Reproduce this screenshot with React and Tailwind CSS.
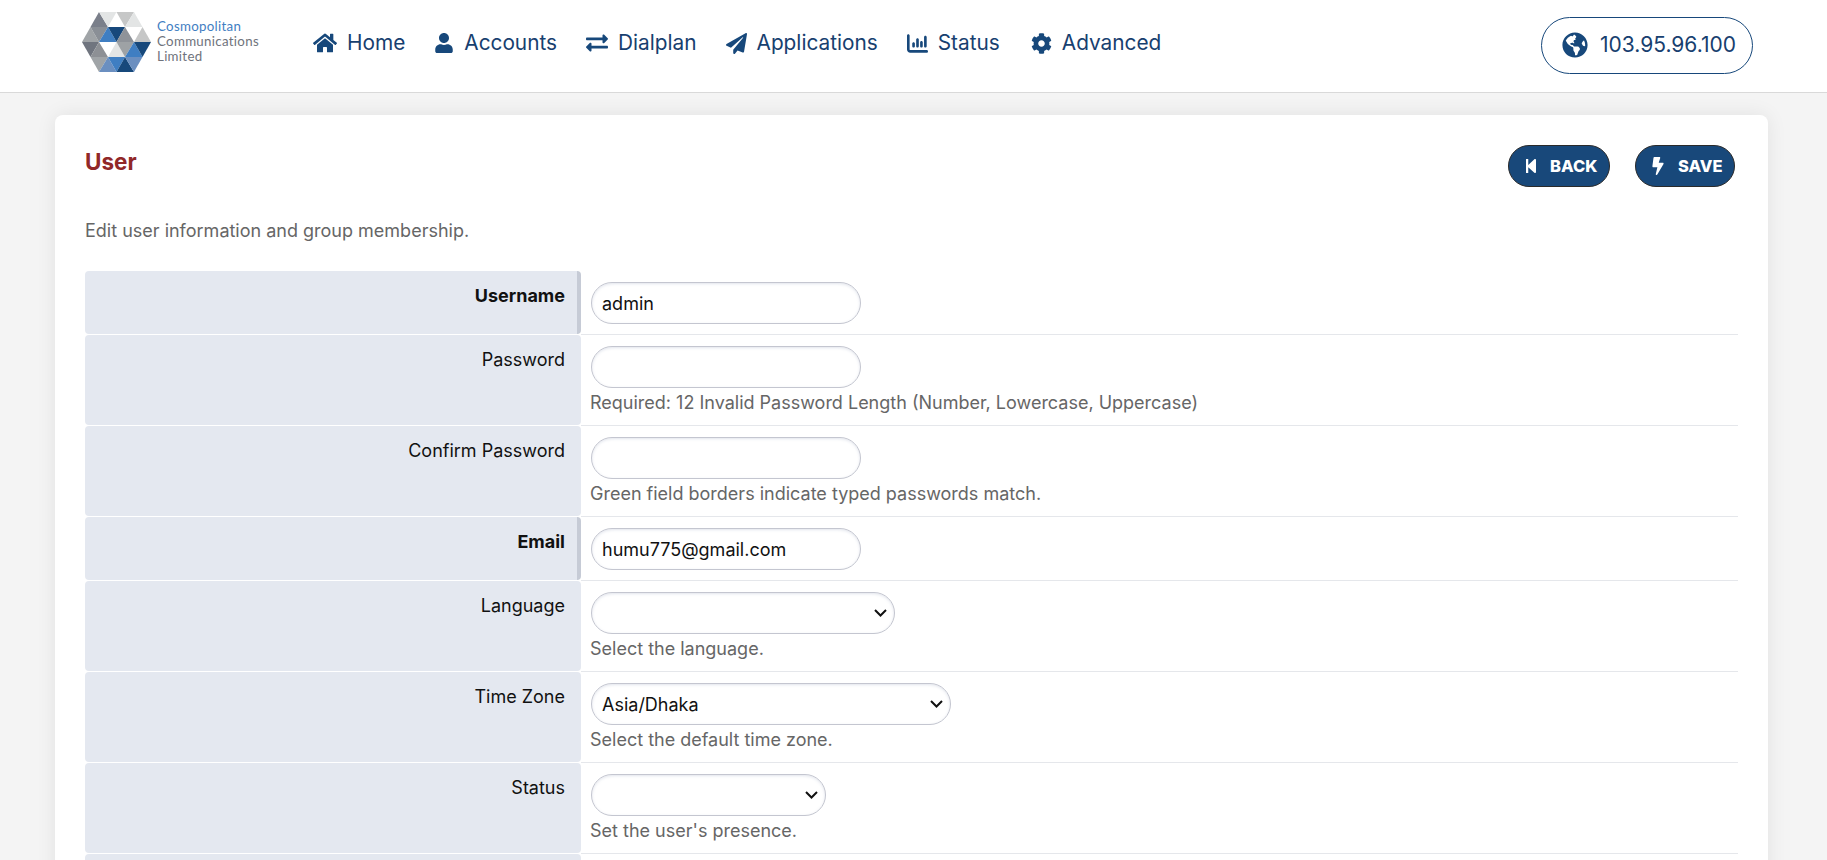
import { FaHome, FaUser, FaExchangeAlt, FaPaperPlane, FaCog, FaGlobeAmericas, FaStepBackward, FaBolt } from "react-icons/fa";
import { FaChartColumn } from "react-icons/fa6";

const NAVY = "#17487b";
const BLUE = "#3f7ec2";
const SLATE = "#6b8fc0";

// logo facets, row by row
const FACETS = [
  ["90.5,27 99,12 108,27", "#7a7f8a"],
  ["99,12 116.5,12 108,27", "#e3e5e5"],
  ["116.5,12 134,12 125,27", "#c6c7c7"],
  ["125,27 134,12 142.5,27", "#e3e5e5"],
  ["82,42 90.5,27 99,42", "#a0a4a7"],
  ["90.5,27 108,27 99,42", "#8a8f96"],
  ["99,42 108,27 116.5,42", BLUE],
  ["108,27 125,27 116.5,42", NAVY],
  ["116.5,42 125,27 134,42", "#8f9399"],
  ["134,42 142.5,27 151,42", "#c6c7c7"],
  ["82,42 99,42 90.5,57", "#70757f"],
  ["90.5,57 99,42 108,57", "#8d9095"],
  ["108,57 116.5,42 125,57", "#e3e5e5"],
  ["116.5,42 134,42 125,57", "#9ea2a5"],
  ["125,57 134,42 142.5,57", BLUE],
  ["134,42 151,42 142.5,57", NAVY],
  ["90.5,57 108,57 99,72", "#a0a4a7"],
  ["99,72 108,57 116.5,72", SLATE],
  ["108,57 125,57 116.5,72", BLUE],
  ["116.5,72 125,57 134,72", NAVY],
  ["125,57 142.5,57 134,72", SLATE],
];

const NAV = [
  ["Home", FaHome, "w-[24px] h-[24px]"],
  ["Accounts", FaUser, "w-[20px] h-[20px]"],
  ["Dialplan", FaExchangeAlt, "w-[22px] h-[22px]"],
  ["Applications", FaPaperPlane, "w-[21px] h-[21px]"],
  ["Status", FaChartColumn, "w-[21px] h-[21px]"],
  ["Advanced", FaCog, "w-[21px] h-[21px] ml-[2px]"],
];

const inputCls = "block h-[42px] rounded-[21px] border border-[#c4c6d0] bg-white shadow-[inset_0_1px_3px_rgba(120,130,170,0.22)] text-[18px] text-[#111] outline-none";

function Logo() {
  return (
    <div className="flex items-center w-[177px] h-[60px] shrink-0 mb-[8px]">
      <svg viewBox="82 12 69 60" className="w-[69px] h-[60px] shrink-0">
        {FACETS.map(([points, fill]) => <polygon key={points} points={points} fill={fill} />)}
      </svg>
      <div className="ml-[6px] text-[13.3px] leading-[15px] font-['Lato',sans-serif] text-[#6f737c] tracking-[0.3px] -mt-[1px]">
        <div className="text-[#3f7ec2]">Cosmopolitan</div>
        <div>Communications</div>
        <div>Limited</div>
      </div>
    </div>
  );
}

function Select({ width, value }) {
  return (
    <div className={`relative ${width}`}>
      <select className={`${inputCls} w-full pl-[10px] pr-[24px] appearance-none`} defaultValue={value}>
        <option>{value}</option>
      </select>
      <svg viewBox="0 0 13 8" className="absolute right-[8px] top-[17px] w-[13px] h-[8px] pointer-events-none">
        <path d="M1 1 L6.5 6.5 L12 1" fill="none" stroke="#111" strokeWidth="2" />
      </svg>
    </div>
  );
}

function Row({ label, required, desc, children }) {
  return (
    <div className="flex">
      <div className={`w-[496px] shrink-0 mb-[1px] bg-[#e4e8f0] rounded-[4px] pt-[14px] text-right text-[18px] leading-[22px] text-[#111] ${required ? "font-bold border-r-4 border-[#c6cbd6] pr-[12px]" : "pr-[16px]"}`}>
        {label}
      </div>
      <div className="flex-1 border-b border-[#e5e7eb] pl-[10px] pt-[11px] pb-[10px]">
        {children}
        {desc && <div className="-ml-[1px] mt-[4px] mb-[1px] text-[18px] leading-[22px] text-[#666]">{desc}</div>}
      </div>
    </div>
  );
}

export default function App() {
  return (
    <div className="h-screen overflow-hidden bg-[#f4f4f4] font-['Inter',sans-serif]">
      <nav className="h-[93px] bg-white border-b border-[#d9d9d9] flex items-center pl-[82px] pr-[74px]">
        <Logo />
        <div className="flex items-center gap-[29px] ml-[54px] mb-[6px]">
          {NAV.map(([name, Icon, size]) => (
            <a key={name} className="flex items-center gap-[10px] text-[20.8px] text-[#17406f]">
              <Icon className={`${size} text-[#17487b]`} />
              {name}
            </a>
          ))}
        </div>
        <div className="ml-auto w-[212px] h-[57px] mb-[2px] rounded-[29px] border border-[#17487b] flex items-center pl-[20px] gap-[12px] text-[21px] text-[#17406f]">
          <FaGlobeAmericas className="w-[26px] h-[26px] text-[#17487b]" />
          103.95.96.100
        </div>
      </nav>

      <div className="ml-[55px] mr-[59px] mt-[22px] bg-white rounded-[8px] shadow-[0_0_20px_rgba(0,0,0,0.08)] pl-[30px] pr-[30px] pt-[30px]">
        <div className="flex justify-between">
          <h1 className="text-[22.5px] leading-[34px] font-bold text-[#912828]">User</h1>
          <div className="flex gap-[25px] pr-[3px]">
            <button className="w-[102px] h-[42px] rounded-[21px] bg-[#18487a] border border-[#2a2a2a] text-white text-[16.5px] font-extrabold flex items-center pl-[14px] gap-[11px]">
              <FaStepBackward className="w-[16px] h-[16px]" />
              BACK
            </button>
            <button className="w-[100px] h-[42px] rounded-[21px] bg-[#18487a] border border-[#2a2a2a] text-white text-[16.5px] font-extrabold flex items-center pl-[16px] gap-[14px]">
              <FaBolt className="w-[12px] h-[18px]" />
              SAVE
            </button>
          </div>
        </div>
        <p className="mt-[33px] text-[18px] leading-[22px] text-[#666]">Edit user information and group membership.</p>

        <div className="mt-[29px] mb-[40px]">
          <Row label="Username" required>
            <input className={`${inputCls} w-[270px] px-[10px]`} defaultValue="admin" />
          </Row>
          <Row label="Password" desc="Required: 12 Invalid Password Length (Number, Lowercase, Uppercase)">
            <input type="password" className={`${inputCls} w-[270px] px-[10px]`} />
          </Row>
          <Row label="Confirm Password" desc="Green field borders indicate typed passwords match.">
            <input type="password" className={`${inputCls} w-[270px] px-[10px]`} />
          </Row>
          <Row label="Email" required>
            <input className={`${inputCls} w-[270px] px-[10px]`} defaultValue="humu775@gmail.com" />
          </Row>
          <Row label="Language" desc="Select the language.">
            <Select width="w-[304px]" value="" />
          </Row>
          <Row label="Time Zone" desc="Select the default time zone.">
            <Select width="w-[360px]" value="Asia/Dhaka" />
          </Row>
          <Row label="Status" desc="Set the user's presence.">
            <Select width="w-[235px]" value="" />
          </Row>
          <Row label="" desc=" ">
            <div className="h-[42px]" />
          </Row>
        </div>
      </div>
    </div>
  );
}
